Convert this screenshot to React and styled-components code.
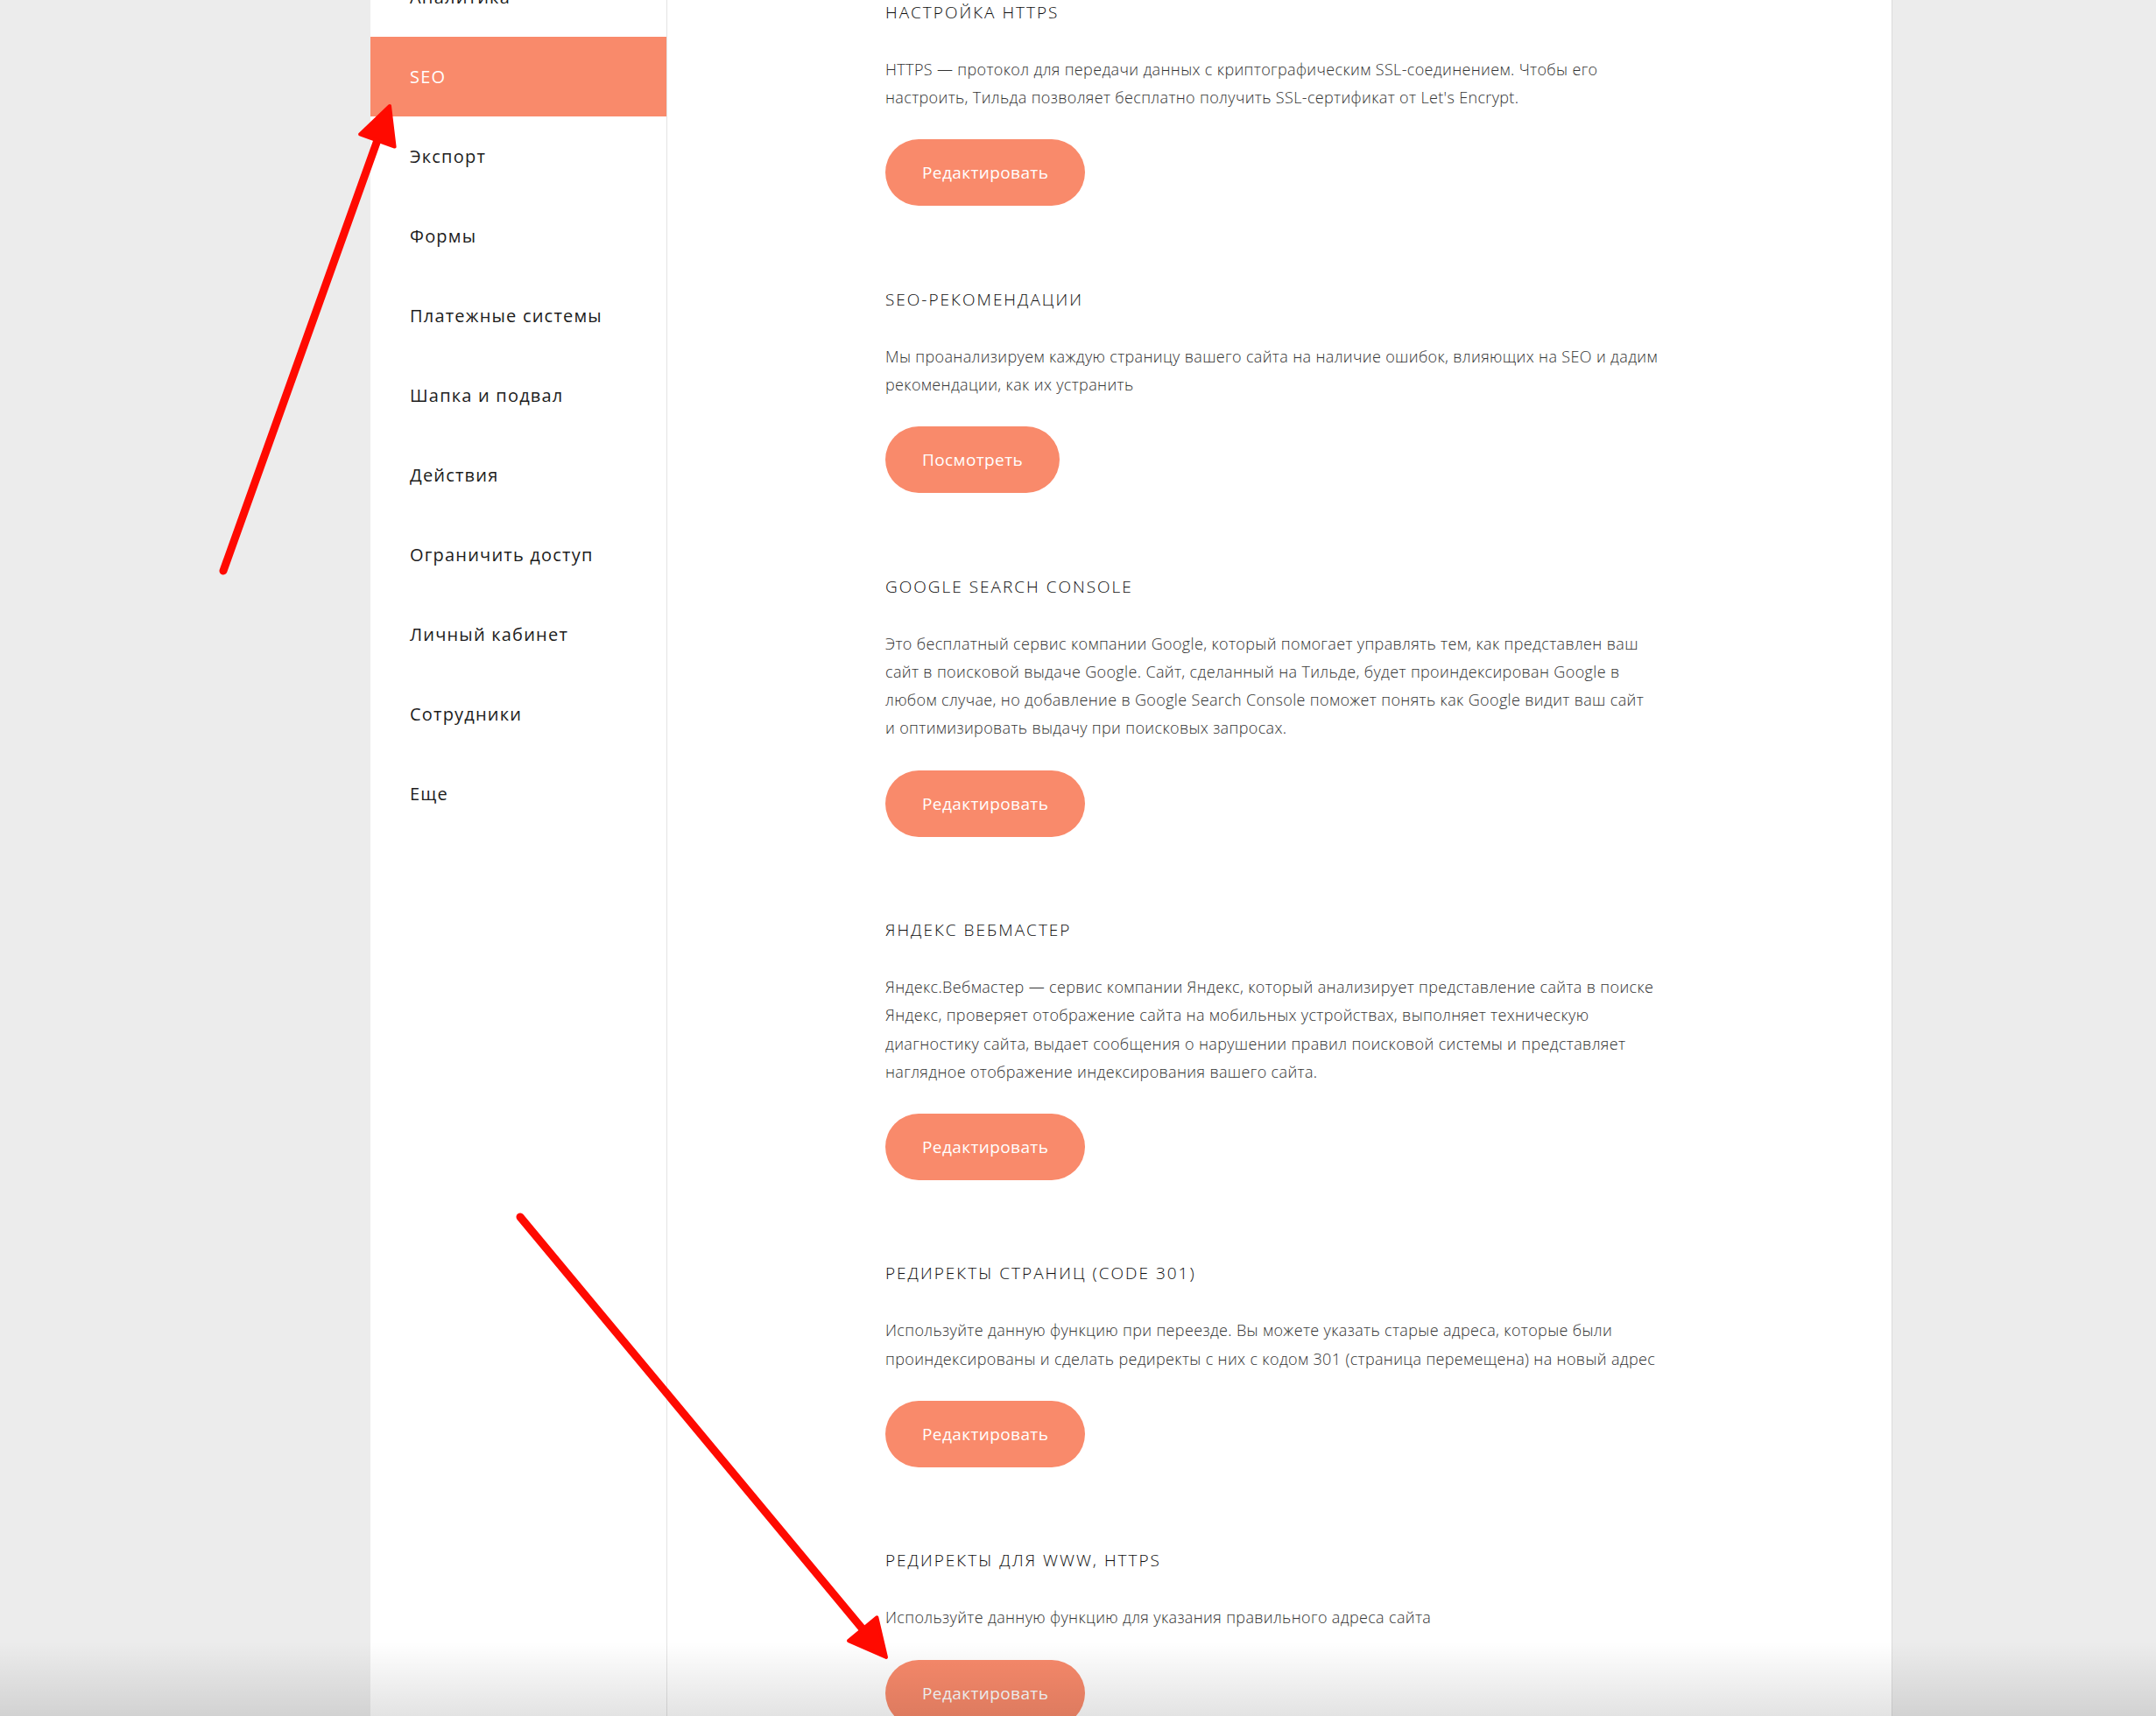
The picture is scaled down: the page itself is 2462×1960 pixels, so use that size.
import React from 'react';
import styled, { createGlobalStyle } from 'styled-components';

const GlobalStyle = createGlobalStyle`
  html, body {
    margin: 0;
    padding: 0;
    height: 100%;
    overflow: hidden;
    background: #ececec;
  }
  #root {
    height: 100%;
  }
`;

const ACCENT = '#f98a6b';
const FONT = '"Open Sans", "Noto Sans", sans-serif';

const Page = styled.div`
  position: relative;
  height: 1960px;
  display: flex;
  padding-left: 423px;
  box-sizing: border-box;
  overflow: hidden;
  font-family: ${FONT};
`;

const Panel = styled.div`
  width: 1738px;
  background: #fff;
  display: flex;
  border-right: 1px solid #dcdcdc;
  box-sizing: border-box;
`;

const Sidebar = styled.nav`
  width: 339px;
  flex-shrink: 0;
  border-right: 1px solid #e3e3e3;
  box-sizing: border-box;
`;

const Menu = styled.ul`
  list-style: none;
  margin: -49px 0 0;
  padding: 0;
`;

const MenuItem = styled.li`
  height: 91px;
  display: flex;
  align-items: center;
  padding-left: 45px;
  box-sizing: border-box;
  font-size: 20px;
  font-weight: 400;
  letter-spacing: 1.2px;
  color: ${(p) => (p.$active ? '#fff' : '#1c1c1c')};
  background: ${(p) => (p.$active ? ACCENT : 'transparent')};
`;

const Content = styled.main`
  flex: 1;
  padding-left: 249px;
  margin-top: -1px;
`;

const Section = styled.section`
  margin-bottom: 91.5px;
`;

const Heading = styled.h3`
  margin: 0;
  font-size: 19px;
  font-weight: 300;
  line-height: 30px;
  letter-spacing: 2px;
  color: #0d0d0d;
`;

const Text = styled.p`
  margin: 34px 0 0;
  font-size: 18px;
  font-weight: 300;
  line-height: 32.2px;
  color: #333;
  letter-spacing: 0.35px;
`;

const Line = styled.span`
  display: block;
  white-space: nowrap;
`;

const Button = styled.button`
  display: block;
  margin-top: 32px;
  height: 76px;
  padding: 0 42px;
  border: none;
  border-radius: 38px;
  background: ${ACCENT};
  color: #fff;
  font-family: ${FONT};
  font-size: 19px;
  font-weight: 400;
  letter-spacing: 0.4px;
  cursor: pointer;
`;

const BottomShade = styled.div`
  position: absolute;
  left: 0;
  right: 0;
  bottom: 0;
  height: 85px;
  background: linear-gradient(to bottom, rgba(0, 0, 0, 0), rgba(0, 0, 0, 0.11));
  pointer-events: none;
  z-index: 2;
`;

const Annotations = styled.svg`
  position: absolute;
  top: 0;
  left: 0;
  pointer-events: none;
  z-index: 3;
`;

const menu = [
  'Аналитика',
  'SEO',
  'Экспорт',
  'Формы',
  'Платежные системы',
  'Шапка и подвал',
  'Действия',
  'Ограничить доступ',
  'Личный кабинет',
  'Сотрудники',
  'Еще',
];

const sections = [
  {
    title: 'НАСТРОЙКА HTTPS',
    lines: [
      'HTTPS — протокол для передачи данных с криптографическим SSL-соединением. Чтобы его',
      'настроить, Тильда позволяет бесплатно получить SSL-сертификат от Let\'s Encrypt.',
    ],
    action: 'Редактировать',
  },
  {
    title: 'SEO-РЕКОМЕНДАЦИИ',
    lines: [
      'Мы проанализируем каждую страницу вашего сайта на наличие ошибок, влияющих на SEO и дадим',
      'рекомендации, как их устранить',
    ],
    action: 'Посмотреть',
  },
  {
    title: 'GOOGLE SEARCH CONSOLE',
    lines: [
      'Это бесплатный сервис компании Google, который помогает управлять тем, как представлен ваш',
      'сайт в поисковой выдаче Google. Сайт, сделанный на Тильде, будет проиндексирован Google в',
      'любом случае, но добавление в Google Search Console поможет понять как Google видит ваш сайт',
      'и оптимизировать выдачу при поисковых запросах.',
    ],
    action: 'Редактировать',
  },
  {
    title: 'ЯНДЕКС ВЕБМАСТЕР',
    lines: [
      'Яндекс.Вебмастер — сервис компании Яндекс, который анализирует представление сайта в поиске',
      'Яндекс, проверяет отображение сайта на мобильных устройствах, выполняет техническую',
      'диагностику сайта, выдает сообщения о нарушении правил поисковой системы и представляет',
      'наглядное отображение индексирования вашего сайта.',
    ],
    action: 'Редактировать',
  },
  {
    title: 'РЕДИРЕКТЫ СТРАНИЦ (CODE 301)',
    lines: [
      'Используйте данную функцию при переезде. Вы можете указать старые адреса, которые были',
      'проиндексированы и сделать редиректы с них с кодом 301 (страница перемещена) на новый адрес',
    ],
    action: 'Редактировать',
  },
  {
    title: 'РЕДИРЕКТЫ ДЛЯ WWW, HTTPS',
    lines: ['Используйте данную функцию для указания правильного адреса сайта'],
    action: 'Редактировать',
  },
];

// red annotation arrow: shaft + triangular head
function Arrow({ from, to }) {
  const dx = to[0] - from[0];
  const dy = to[1] - from[1];
  const len = Math.hypot(dx, dy);
  const ux = dx / len;
  const uy = dy / len;
  const bx = to[0] - ux * 42;
  const by = to[1] - uy * 42;
  const px = -uy * 21;
  const py = ux * 21;
  const head = `${to[0]},${to[1]} ${bx + px},${by + py} ${bx - px},${by - py}`;
  return (
    <g fill="#ff0a00" stroke="#ff0a00" strokeLinejoin="round" strokeLinecap="round">
      <line x1={from[0]} y1={from[1]} x2={bx + ux * 4} y2={by + uy * 4} strokeWidth="9" />
      <polygon points={head} strokeWidth="4" />
    </g>
  );
}

export default function App() {
  return (
    <>
      <GlobalStyle />
      <Page>
        <Panel>
          <Sidebar>
            <Menu>
              {menu.map((item) => (
                <MenuItem key={item} $active={item === 'SEO'}>
                  {item}
                </MenuItem>
              ))}
            </Menu>
          </Sidebar>
          <Content>
            {sections.map((s) => (
              <Section key={s.title}>
                <Heading>{s.title}</Heading>
                <Text>
                  {s.lines.map((l) => (
                    <Line key={l}>{l}</Line>
                  ))}
                </Text>
                <Button>{s.action}</Button>
              </Section>
            ))}
          </Content>
        </Panel>
        <BottomShade />
        <Annotations width="2462" height="1960" viewBox="0 0 2462 1960">
          <Arrow from={[255, 652]} to={[445, 121]} />
          <Arrow from={[594, 1390]} to={[1012, 1893]} />
        </Annotations>
      </Page>
    </>
  );
}
